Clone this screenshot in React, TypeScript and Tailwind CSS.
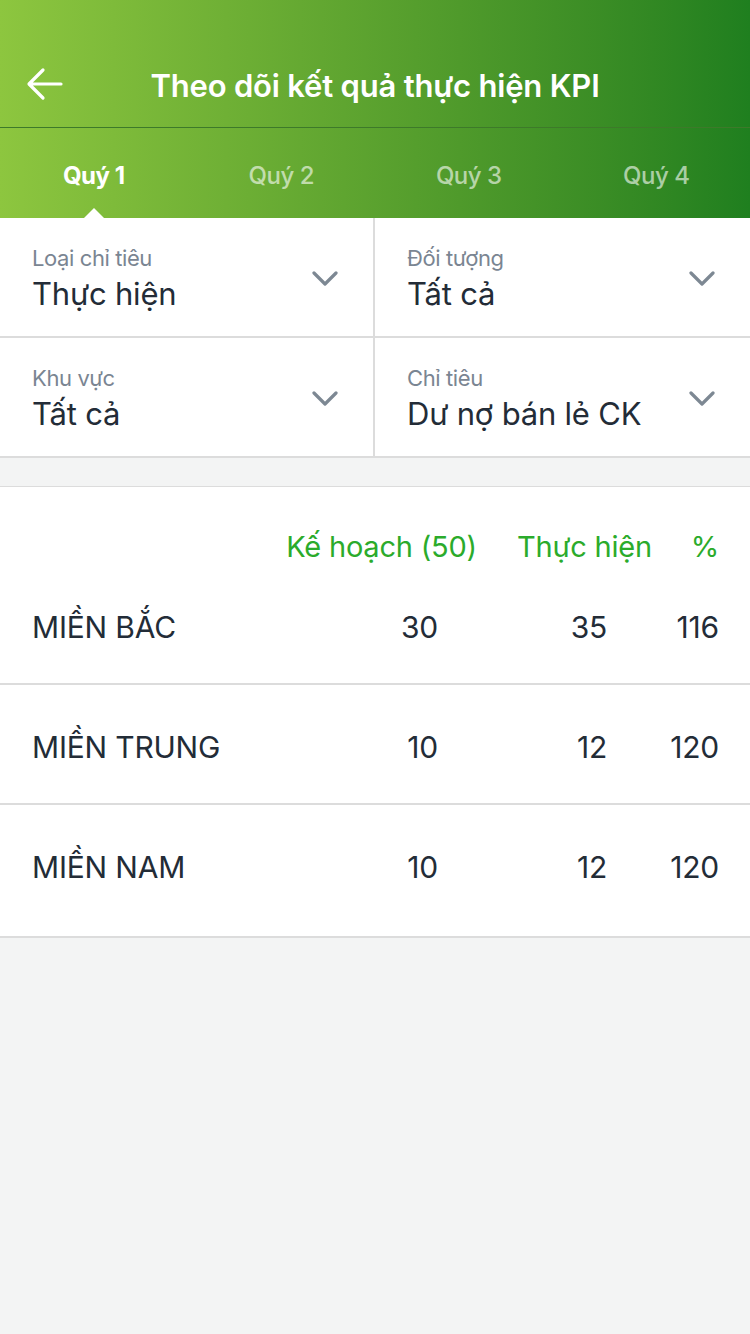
import React, { useState } from 'react';

const quarters = ['Quý 1', 'Quý 2', 'Quý 3', 'Quý 4'];

const filters = [
  { label: 'Loại chỉ tiêu', value: 'Thực hiện' },
  { label: 'Đối tượng', value: 'Tất cả' },
  { label: 'Khu vực', value: 'Tất cả' },
  { label: 'Chỉ tiêu', value: 'Dư nợ bán lẻ CK' },
];

const rows = [
  { name: 'MIỀN BẮC', plan: 30, done: 35, pct: 116 },
  { name: 'MIỀN TRUNG', plan: 10, done: 12, pct: 120 },
  { name: 'MIỀN NAM', plan: 10, done: 12, pct: 120 },
];

const Chevron: React.FC = () => (
  <svg width="26" height="18" viewBox="0 0 26 18" fill="none">
    <path d="M2 3l11 11L24 3" stroke="#7d8893" strokeWidth="3.2" strokeLinecap="round" strokeLinejoin="round" />
  </svg>
);

const App: React.FC = () => {
  const [active, setActive] = useState(0);

  return (
    <div className="min-h-[1334px] bg-[#f3f4f4] font-['Inter','Roboto',sans-serif]">
      <header className="bg-gradient-to-r from-[#8dc63f] to-[#1f7f1f] text-white">
        <div className="relative h-[128px] flex items-end justify-center pb-[23px] border-b border-[#3d7a2a]">
          <button className="absolute left-[26px] bottom-[24px]">
            <svg width="38" height="38" viewBox="0 0 38 38" fill="none">
              <path d="M35 19H4M17 5L3 19l14 14" stroke="white" strokeWidth="3.2" strokeLinecap="round" strokeLinejoin="round" />
            </svg>
          </button>
          <h1 className="text-[31px] font-semibold tracking-[-0.2px] leading-[36px]">Theo dõi kết quả thực hiện KPI</h1>
        </div>
        <nav className="grid grid-cols-4 h-[90px]">
          {quarters.map((q, i) => (
            <button
              key={q}
              onClick={() => setActive(i)}
              className={`relative flex items-center justify-center pt-[5px] text-[24px] tracking-[-0.5px] ${i === active ? 'font-bold text-white' : 'font-medium text-white/60'}`}
            >
              {q}
              {i === active && (
                <span className="absolute bottom-0 left-1/2 -translate-x-1/2 w-0 h-0 border-l-[10px] border-r-[10px] border-b-[10px] border-l-transparent border-r-transparent border-b-white" />
              )}
            </button>
          ))}
        </nav>
      </header>

      <section className="grid grid-cols-2 bg-white">
        {filters.map((f, i) => (
          <div
            key={f.label}
            className={`h-[120px] flex items-center justify-between pl-[32px] pr-[35px] border-b-2 border-[#dcdcdc] ${i % 2 === 0 ? 'border-r-2' : ''}`}
          >
            <div className="flex flex-col pt-[6px]">
              <span className="text-[22px] leading-[28px] text-[#7a8592] tracking-[-0.4px]">{f.label}</span>
              <span className="text-[31px] leading-[44px] text-[#232c37] tracking-[-0.2px]">{f.value}</span>
            </div>
            <div className="pt-[4px]">
              <Chevron />
            </div>
          </div>
        ))}
      </section>

      <section className="mt-[28px] bg-white border-t border-b-2 border-[#dcdcdc]">
        <div className="flex h-[80px] items-end pb-[1px] pr-[31px] text-[29px] leading-[38px] text-[#2bab2b] tracking-[-0.2px]">
          <div className="flex-1" />
          <div className="text-right">Kế hoạch (50)</div>
          <div className="w-[175px] text-right">Thực hiện</div>
          <div className="w-[67px] text-right">%</div>
        </div>
        {rows.map((r, i) => (
          <div
            key={r.name}
            className={`flex items-center pl-[32px] pr-[31px] text-[30px] text-[#232c37] tracking-[-0.2px] ${i === 0 ? 'h-[116px] pt-[4px]' : 'border-t-2 border-[#dcdcdc]'} ${i === 1 ? 'h-[120px] pt-[7px]' : ''} ${i === 2 ? 'h-[133px] pb-[6px]' : ''}`}
          >
            <div className="flex-1">{r.name}</div>
            <div className="w-[120px] text-right pr-[39px]">{r.plan}</div>
            <div className="w-[175px] text-right pr-[45px]">{r.done}</div>
            <div className="w-[67px] text-right">{r.pct}</div>
          </div>
        ))}
      </section>
    </div>
  );
};

export default App;
